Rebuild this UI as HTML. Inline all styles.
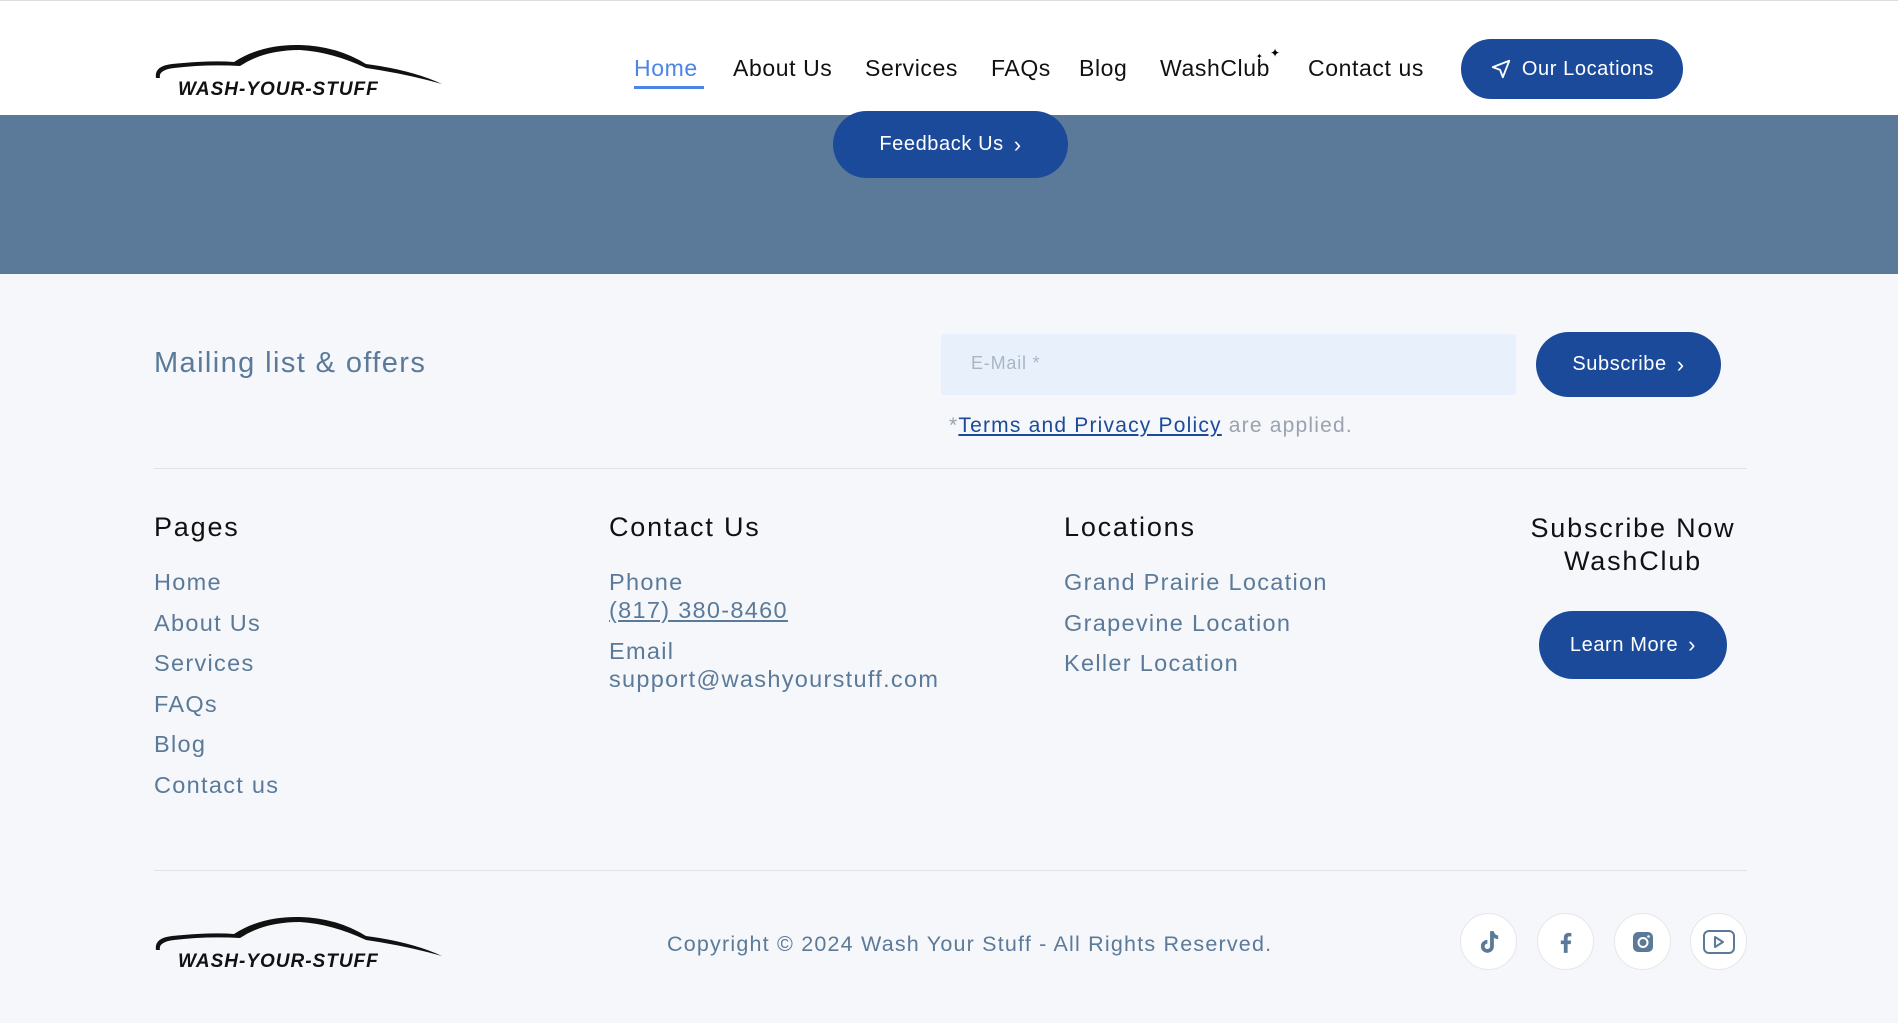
<!DOCTYPE html>
<html><head><meta charset="utf-8">
<style>
*{margin:0;padding:0;box-sizing:border-box}
body{width:1898px;height:1023px;background:#f5f7fb;font-family:"Liberation Sans",sans-serif;position:relative;overflow:hidden}
.a{position:absolute;white-space:nowrap}
.hdr{position:absolute;left:0;top:0;width:1898px;height:115px;background:#fff;border-top:1px solid #ddd}
.band{position:absolute;left:0;top:115px;width:1898px;height:159px;background:#5b7a99}
.nav{font-size:23px;color:#111;top:55px;letter-spacing:.6px}
.btn{position:absolute;background:#1c4a9b;color:#fff;border-radius:34px;display:flex;align-items:center;justify-content:center;font-size:20px;gap:10px;letter-spacing:.6px}
.h{font-size:27px;color:#111;letter-spacing:1.8px}
.l{font-size:23.5px;color:#5b7a99;letter-spacing:1.3px}
.hr{position:absolute;left:154px;width:1593px;height:1px;background:#dfe2e8}
.soc{position:absolute;top:913px;width:57px;height:57px;border-radius:50%;background:#fff;border:1px solid #e4e6ea;display:flex;align-items:center;justify-content:center}
</style></head><body>
<div class="hdr"></div>
<svg class="a" style="left:152px;top:40px" width="292" height="60" viewBox="0 0 292 60">
<path d="M4 38 Q2 26 20 24 Q60 20 82 22 Q110 4 148 5 Q185 6 214 24 Q260 30 290 44 Q255 34 214 28 Q180 12 148 10 Q112 10 88 26 Q55 24 22 28 Q6 30 8 38Z" fill="#111"/>
<text x="26" y="55" font-family="Liberation Sans" font-style="italic" font-weight="bold" font-size="19" fill="#111" letter-spacing="1">WASH-YOUR-STUFF</text>
</svg>
<div class="a nav" style="left:634px;color:#4c84e8">Home</div>
<div class="a" style="left:634px;top:86px;width:70px;height:3px;background:#4c84e8"></div>
<div class="a nav" style="left:733px">About Us</div>
<div class="a nav" style="left:865px">Services</div>
<div class="a nav" style="left:991px">FAQs</div>
<div class="a nav" style="left:1079px">Blog</div>
<div class="a nav" style="left:1160px">WashClub</div>
<div class="a" style="left:1270px;top:46px;font-size:12px">✦</div>
<div class="a" style="left:1256px;top:52px;font-size:8px">✦</div>
<div class="a nav" style="left:1308px">Contact us</div>
<div class="btn" style="left:1461px;top:39px;width:222px;height:60px"><svg width="22" height="22" viewBox="0 0 24 24" fill="none" stroke="#fff" stroke-width="2" stroke-linejoin="round"><path d="M21 3 3 10l8 3 3 8z"/></svg>Our Locations</div>
<div class="band"></div>
<div class="btn" style="left:833px;top:111px;width:235px;height:67px">Feedback Us <span style="font-size:22px">›</span></div>
<div class="a" style="left:154px;top:347px;font-size:29px;color:#5b7a99;letter-spacing:1.4px">Mailing list &amp; offers</div>
<div class="a" style="left:941px;top:334px;width:575px;height:61px;background:#e8f0fc;border-radius:3px"></div>
<div class="a" style="left:971px;top:353px;font-size:18px;color:#a9b6c6;letter-spacing:.8px">E-Mail *</div>
<div class="btn" style="left:1536px;top:332px;width:185px;height:65px">Subscribe <span style="font-size:22px">›</span></div>
<div class="a" style="left:949px;top:414px;font-size:21px;color:#9aa3ad;letter-spacing:1.2px">*<span style="color:#1c4a9b;text-decoration:underline">Terms and Privacy Policy</span> are applied.</div>
<div class="hr" style="top:468px"></div>
<div class="a h" style="left:154px;top:512px">Pages</div>
<div class="a l" style="left:154px;top:569px">Home</div>
<div class="a l" style="left:154px;top:610px">About Us</div>
<div class="a l" style="left:154px;top:650px">Services</div>
<div class="a l" style="left:154px;top:691px">FAQs</div>
<div class="a l" style="left:154px;top:731px">Blog</div>
<div class="a l" style="left:154px;top:772px">Contact us</div>
<div class="a h" style="left:609px;top:512px">Contact Us</div>
<div class="a l" style="left:609px;top:569px">Phone</div>
<div class="a l" style="left:609px;top:597px;text-decoration:underline">(817) 380-8460</div>
<div class="a l" style="left:609px;top:638px">Email</div>
<div class="a l" style="left:609px;top:666px">support@washyourstuff.com</div>
<div class="a h" style="left:1064px;top:512px">Locations</div>
<div class="a l" style="left:1064px;top:569px">Grand Prairie Location</div>
<div class="a l" style="left:1064px;top:610px">Grapevine Location</div>
<div class="a l" style="left:1064px;top:650px">Keller Location</div>
<div class="a h" style="left:1503px;top:512px;width:260px;text-align:center;line-height:33px">Subscribe Now<br>WashClub</div>
<div class="btn" style="left:1539px;top:611px;width:188px;height:68px">Learn More <span style="font-size:22px">›</span></div>
<div class="hr" style="top:870px"></div>
<svg class="a" style="left:152px;top:912px" width="292" height="60" viewBox="0 0 292 60">
<path d="M4 38 Q2 26 20 24 Q60 20 82 22 Q110 4 148 5 Q185 6 214 24 Q260 30 290 44 Q255 34 214 28 Q180 12 148 10 Q112 10 88 26 Q55 24 22 28 Q6 30 8 38Z" fill="#111"/>
<text x="26" y="55" font-family="Liberation Sans" font-style="italic" font-weight="bold" font-size="19" fill="#111" letter-spacing="1">WASH-YOUR-STUFF</text>
</svg>
<div class="a" style="left:667px;top:932px;font-size:21.5px;color:#5b7a99;letter-spacing:1.2px">Copyright © 2024 Wash Your Stuff - All Rights Reserved.</div>
<div class="soc" style="left:1460px"><svg width="26" height="26" viewBox="0 0 24 24" fill="#5b7a99"><path d="M13 2h3.5c.3 2.3 1.8 3.8 4 4v3.4c-1.5 0-2.9-.5-4-1.3V16a6 6 0 1 1-6-6v3.5a2.5 2.5 0 1 0 2.5 2.5z"/></svg></div>
<div class="soc" style="left:1537px"><svg width="26" height="26" viewBox="0 0 24 24" fill="#5b7a99"><path d="M13.5 22v-8h2.8l.5-3.4h-3.3V8.5c0-1 .4-1.7 1.8-1.7H17V3.8c-.4 0-1.5-.2-2.700-.2-2.6 0-4.3 1.600-4.3 4.4v2.6H7.2V14H10v8z"/></svg></div>
<div class="soc" style="left:1614px"><svg width="24" height="24" viewBox="0 0 24 24"><rect x="2" y="2" width="20" height="20" rx="5" fill="#5b7a99"/><circle cx="12" cy="12.5" r="4.5" fill="none" stroke="#fff" stroke-width="2"/><circle cx="17.5" cy="6.5" r="1.3" fill="#fff"/></svg></div>
<div class="soc" style="left:1690px"><svg width="34" height="26" viewBox="0 0 34 26" fill="none" stroke="#5b7a99" stroke-width="2"><rect x="2" y="2" width="30" height="22" rx="5"/><path d="M13 8v10l8-5z" stroke-linejoin="round"/></svg></div>
</body></html>
